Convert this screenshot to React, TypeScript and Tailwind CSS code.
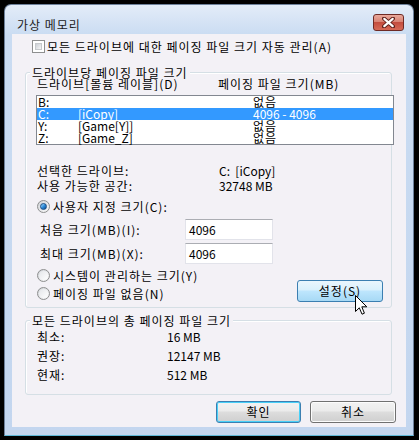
import React from "react"

function CheckBox() {
  return (
    <span className="w-[13px] h-[13px] border border-[#8e8f8f] bg-white p-[2px] shrink-0">
      <span className="block w-full h-full border border-[#c6c9cc] bg-gradient-to-br from-[#cbcfd5] to-[#f6f6f6]" />
    </span>
  )
}

function Radio({ checked }: { checked?: boolean }) {
  return (
    <span className="w-[13px] h-[13px] rounded-full border border-[#8e8f8f] bg-gradient-to-br from-[#d0d3d8] to-[#fbfbfb] flex items-center justify-center shrink-0">
      {checked ? (
        <span className="w-[7px] h-[7px] rounded-full bg-gradient-to-br from-[#a6e2ff] via-[#2f8ddb] to-[#0b4a8b] border border-[#1a4e85]" />
      ) : (
        <span className="w-[9px] h-[9px] rounded-full bg-gradient-to-br from-[#e4e6e9] to-[#ffffff]" />
      )}
    </span>
  )
}

function WinButton({ label, kind, className }: { label: string; kind: "normal" | "default" | "hot"; className: string }) {
  const skin =
    kind === "hot"
      ? "border-[#3c7fb1] bg-[linear-gradient(#eaf6fd_0%,#d9f0fc_45%,#bee6fd_50%,#a7d9f5_100%)]"
      : kind === "default"
        ? "border-[#3c7fb1] bg-[linear-gradient(#f2f2f2_0%,#ebebeb_45%,#dddddd_50%,#cfcfcf_100%)] shadow-[inset_0_0_0_1px_#48d0f8]"
        : "border-[#707070] bg-[linear-gradient(#f2f2f2_0%,#ebebeb_45%,#dddddd_50%,#cfcfcf_100%)] shadow-[inset_0_0_0_1px_#fcfcfc]"
  return (
    <div className={`h-[22px] rounded-[3px] border flex items-center justify-center leading-[12px] ${skin} ${className}`}>
      {label}
    </div>
  )
}

function GroupBox({ title, className, children }: { title: string; className: string; children: React.ReactNode }) {
  return (
    <div className={`relative rounded-[3px] border border-[#d5dfe5] shadow-[inset_1px_1px_0_#ffffff] ${className}`}>
      <span className="absolute -top-[7px] left-[4px] bg-[#f3f1f6] px-[2px] leading-[13px]">{title}</span>
      {children}
    </div>
  )
}

const drives = [
  { d: "B:", label: "", size: "없음" },
  { d: "C:", label: "[iCopy]", size: "4096 - 4096", sel: true },
  { d: "Y:", label: "[Game[Y]]", size: "없음" },
  { d: "Z:", label: "[Game_Z]", size: "없음" },
]

export default function App() {
  return (
    <div className="relative w-[419px] h-[440px] bg-black pt-[4px] pl-[4px] font-['Noto_Sans_CJK_KR','Noto_Sans',sans-serif] text-[12px] leading-[12px] tracking-[1px] text-black">
      <div className="w-[410px] h-[432px] rounded-t-[7px] border border-[#6d819b] border-b-[#5fb9d8] bg-[linear-gradient(#e3ecf8_0px,#cadcf2_30px,#c3d6ef_100%)] flex flex-col">
        {/* title bar */}
        <div className="h-[29px] flex items-start pt-[9px] pl-[12px] pr-[9px]">
          <span className="mt-[5px] text-[#1b1b1b] leading-[12px]">가상 메모리</span>
          <div className="ml-auto w-[31px] h-[17px] rounded-[3px] border border-[#6e2a25] bg-[linear-gradient(#e9a99c_0%,#d98475_45%,#c44d3f_50%,#d66a57_100%)] flex items-center justify-center">
            <svg width="13" height="11" viewBox="0 0 13 11">
              <path d="M2 1.5 L11 9.5 M11 1.5 L2 9.5" stroke="#5a1d18" strokeWidth="4" strokeLinecap="round" />
              <path d="M2.3 1.8 L10.7 9.2 M10.7 1.8 L2.3 9.2" stroke="#ffffff" strokeWidth="2.2" strokeLinecap="round" />
            </svg>
          </div>
        </div>

        {/* client area */}
        <div className="ml-[7px] w-[394px] h-[393px] bg-[#f3f1f6] pt-[6px]">
          <div className="flex items-center h-[13px] pl-[20px] gap-[2px]">
            <CheckBox />
            <span>모든 드라이브에 대한 페이징 파일 크기 자동 관리(A)</span>
          </div>

          <GroupBox title="드라이브당 페이징 파일 크기" className="ml-[13px] mt-[19px] w-[367px] h-[236px] pt-[5px]">
            <div className="flex h-[12px] pl-[11px]">
              <span className="w-[181px]">드라이브[볼륨 레이블](D)</span>
              <span>페이징 파일 크기(MB)</span>
            </div>
            <div className="ml-[10px] mt-[5px] w-[358px] h-[50px] border border-[#828790] bg-white">
              {drives.map((r) => (
                <div key={r.d} className={`flex h-[12px] pl-[1px] ${r.sel ? "bg-[#3399ff] text-white" : ""}`}>
                  <span className="w-[40px] tracking-normal">{r.d}</span>
                  <span className="w-[175px] tracking-normal">{r.label}</span>
                  <span className={r.sel ? "tracking-normal" : ""}>{r.size}</span>
                </div>
              ))}
            </div>

            <div className="mt-[18px] pl-[11px]">
              <div className="flex h-[15px] items-center">
                <span className="w-[182px]">선택한 드라이브:</span>
                <span className="tracking-normal">C:&nbsp;&nbsp;[iCopy]</span>
              </div>
              <div className="flex h-[15px] items-center">
                <span className="w-[182px]">사용 가능한 공간:</span>
                <span className="tracking-normal">32748 MB</span>
              </div>
            </div>

            <div className="mt-[7px] pl-[11px] flex items-center h-[13px] gap-[3px]">
              <Radio checked />
              <span>사용자 지정 크기(C):</span>
            </div>

            <div className="mt-[6px] pl-[14px] flex items-center h-[21px]">
              <span className="w-[145px]">처음 크기(MB)(I):</span>
              <div className="w-[88px] h-[21px] border border-[#e2e3ea] border-t-[#abadb3] bg-white pl-[3px] flex items-center tracking-normal">4096</div>
            </div>
            <div className="mt-[3px] pl-[14px] flex items-center h-[21px]">
              <span className="w-[145px]">최대 크기(MB)(X):</span>
              <div className="w-[88px] h-[21px] border border-[#e2e3ea] border-t-[#abadb3] bg-white pl-[3px] flex items-center tracking-normal">4096</div>
            </div>

            <div className="mt-[5px] pl-[11px] pr-[8px] flex items-start">
              <div className="flex flex-col gap-[5px]">
                <div className="flex items-center h-[13px] gap-[3px]">
                  <Radio />
                  <span>시스템이 관리하는 크기(Y)</span>
                </div>
                <div className="flex items-center h-[13px] gap-[3px]">
                  <Radio />
                  <span>페이징 파일 없음(N)</span>
                </div>
              </div>
              <WinButton label="설정(S)" kind="hot" className="ml-auto mt-[11px] w-[86px]" />
            </div>
          </GroupBox>

          <GroupBox title="모든 드라이브의 총 페이징 파일 크기" className="ml-[13px] mt-[12px] w-[367px] h-[75px] pt-[6px] pl-[11px]">
            {[
              ["최소:", "16 MB"],
              ["권장:", "12147 MB"],
              ["현재:", "512 MB"],
            ].map(([k, v]) => (
              <div key={k} className="flex items-center h-[19px]">
                <span className="w-[130px]">{k}</span>
                <span className="tracking-normal">{v}</span>
              </div>
            ))}
          </GroupBox>

          <div className="mt-[6px] flex justify-end gap-[9px] pr-[10px]">
            <WinButton label="확인" kind="default" className="w-[85px]" />
            <WinButton label="취소" kind="normal" className="w-[86px]" />
          </div>
        </div>
      </div>

      {/* mouse pointer over the 설정 button */}
      <svg className="absolute left-[355px] top-[295px]" width="13" height="21" viewBox="0 0 13 21">
        <path d="M0.5 0.5 L0.5 16.5 L4.3 12.8 L7 19.2 L9.4 18.2 L6.8 11.8 L11.8 11.8 Z" fill="#ffffff" stroke="#000000" strokeWidth="1" strokeLinejoin="miter" />
      </svg>
    </div>
  )
}
